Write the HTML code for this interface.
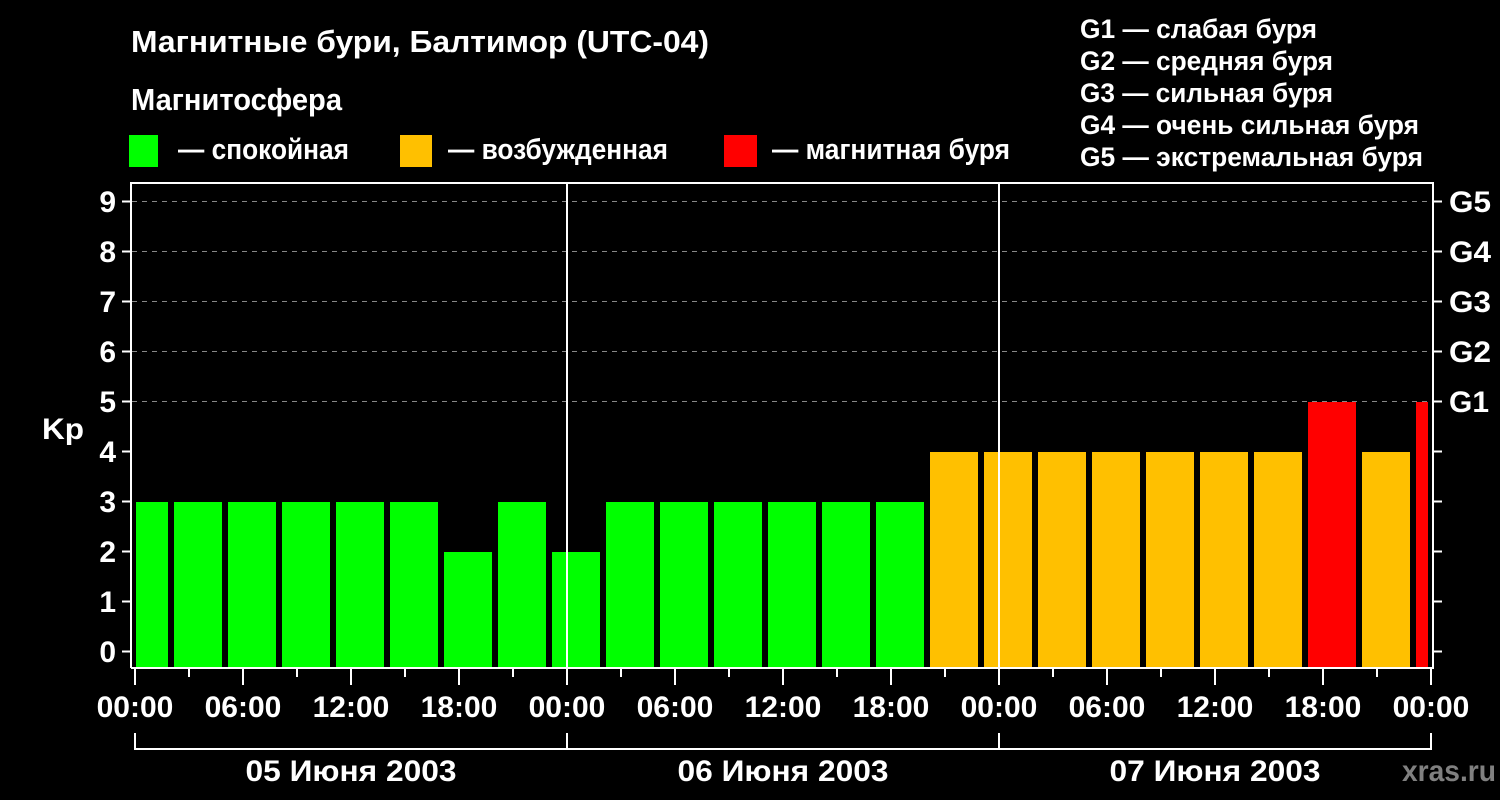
<!DOCTYPE html>
<html><head><meta charset="utf-8"><style>
html,body{margin:0;padding:0;background:#000;width:1500px;height:800px;overflow:hidden}
svg{display:block}
text{font-family:"Liberation Sans",Arial,sans-serif;font-weight:bold;fill:#fff}
</style></head><body>
<svg width="1500" height="800" viewBox="0 0 1500 800" xmlns="http://www.w3.org/2000/svg">
<rect width="1500" height="800" fill="#000"/>
<text x="131" y="52" font-size="31" textLength="578" lengthAdjust="spacingAndGlyphs">Магнитные бури, Балтимор (UTC-04)</text>
<text x="131" y="110" font-size="31" textLength="211" lengthAdjust="spacingAndGlyphs">Магнитосфера</text>
<rect x="129" y="135" width="29" height="32" fill="#00ff00"/>
<text x="178" y="159" font-size="29" textLength="171" lengthAdjust="spacingAndGlyphs">— спокойная</text>
<rect x="400" y="135" width="32" height="32" fill="#ffc000"/>
<text x="448" y="159" font-size="29" textLength="220" lengthAdjust="spacingAndGlyphs">— возбужденная</text>
<rect x="724" y="135" width="33" height="32" fill="#ff0000"/>
<text x="772" y="159" font-size="29" textLength="238" lengthAdjust="spacingAndGlyphs">— магнитная буря</text>
<g font-size="27">
<text x="1080" y="38" textLength="237" lengthAdjust="spacingAndGlyphs">G1 — слабая буря</text>
<text x="1080" y="70" textLength="253" lengthAdjust="spacingAndGlyphs">G2 — средняя буря</text>
<text x="1080" y="102" textLength="253" lengthAdjust="spacingAndGlyphs">G3 — сильная буря</text>
<text x="1080" y="134" textLength="339" lengthAdjust="spacingAndGlyphs">G4 — очень сильная буря</text>
<text x="1080" y="166" textLength="343" lengthAdjust="spacingAndGlyphs">G5 — экстремальная буря</text>
</g>
<g stroke="#888" stroke-width="1" stroke-dasharray="5,5">
<line x1="132" y1="201.5" x2="1432" y2="201.5"/>
<line x1="132" y1="251.5" x2="1432" y2="251.5"/>
<line x1="132" y1="301.5" x2="1432" y2="301.5"/>
<line x1="132" y1="351.5" x2="1432" y2="351.5"/>
<line x1="132" y1="401.5" x2="1432" y2="401.5"/>
</g>
<svg x="136" y="180" width="1292" height="488" viewBox="136 180 1292 488" overflow="hidden">
<g>
<rect x="120" y="502" width="48" height="166" fill="#00ff00"/>
<rect x="174" y="502" width="48" height="166" fill="#00ff00"/>
<rect x="228" y="502" width="48" height="166" fill="#00ff00"/>
<rect x="282" y="502" width="48" height="166" fill="#00ff00"/>
<rect x="336" y="502" width="48" height="166" fill="#00ff00"/>
<rect x="390" y="502" width="48" height="166" fill="#00ff00"/>
<rect x="444" y="552" width="48" height="116" fill="#00ff00"/>
<rect x="498" y="502" width="48" height="166" fill="#00ff00"/>
<rect x="552" y="552" width="48" height="116" fill="#00ff00"/>
<rect x="606" y="502" width="48" height="166" fill="#00ff00"/>
<rect x="660" y="502" width="48" height="166" fill="#00ff00"/>
<rect x="714" y="502" width="48" height="166" fill="#00ff00"/>
<rect x="768" y="502" width="48" height="166" fill="#00ff00"/>
<rect x="822" y="502" width="48" height="166" fill="#00ff00"/>
<rect x="876" y="502" width="48" height="166" fill="#00ff00"/>
<rect x="930" y="452" width="48" height="216" fill="#ffc000"/>
<rect x="984" y="452" width="48" height="216" fill="#ffc000"/>
<rect x="1038" y="452" width="48" height="216" fill="#ffc000"/>
<rect x="1092" y="452" width="48" height="216" fill="#ffc000"/>
<rect x="1146" y="452" width="48" height="216" fill="#ffc000"/>
<rect x="1200" y="452" width="48" height="216" fill="#ffc000"/>
<rect x="1254" y="452" width="48" height="216" fill="#ffc000"/>
<rect x="1308" y="402" width="48" height="266" fill="#ff0000"/>
<rect x="1362" y="452" width="48" height="216" fill="#ffc000"/>
<rect x="1416" y="402" width="48" height="266" fill="#ff0000"/>
</g>
</svg>
<g stroke="#fff" stroke-width="2" fill="none">
<path d="M131 668 V183 H1433 V668 H131"/>
<line x1="567" y1="183" x2="567" y2="668"/>
<line x1="999" y1="183" x2="999" y2="668"/>
</g>
<g stroke="#fff" stroke-width="2">
<line x1="122" y1="201.5" x2="131" y2="201.5"/><line x1="122" y1="251.5" x2="131" y2="251.5"/>
<line x1="122" y1="301.5" x2="131" y2="301.5"/><line x1="122" y1="351.5" x2="131" y2="351.5"/>
<line x1="122" y1="401.5" x2="131" y2="401.5"/><line x1="122" y1="451.5" x2="131" y2="451.5"/>
<line x1="122" y1="501.5" x2="131" y2="501.5"/><line x1="122" y1="551.5" x2="131" y2="551.5"/>
<line x1="122" y1="601.5" x2="131" y2="601.5"/><line x1="122" y1="651.5" x2="131" y2="651.5"/>
<line x1="1433" y1="201.5" x2="1442" y2="201.5"/><line x1="1433" y1="251.5" x2="1442" y2="251.5"/>
<line x1="1433" y1="301.5" x2="1442" y2="301.5"/><line x1="1433" y1="351.5" x2="1442" y2="351.5"/>
<line x1="1433" y1="401.5" x2="1442" y2="401.5"/><line x1="1433" y1="451.5" x2="1442" y2="451.5"/>
<line x1="1433" y1="501.5" x2="1442" y2="501.5"/><line x1="1433" y1="551.5" x2="1442" y2="551.5"/>
<line x1="1433" y1="601.5" x2="1442" y2="601.5"/><line x1="1433" y1="651.5" x2="1442" y2="651.5"/>
</g>
<g stroke="#fff" stroke-width="2">
<line x1="135" y1="668" x2="135" y2="685"/><line x1="189" y1="668" x2="189" y2="677"/>
<line x1="243" y1="668" x2="243" y2="685"/><line x1="297" y1="668" x2="297" y2="677"/>
<line x1="351" y1="668" x2="351" y2="685"/><line x1="405" y1="668" x2="405" y2="677"/>
<line x1="459" y1="668" x2="459" y2="685"/><line x1="513" y1="668" x2="513" y2="677"/>
<line x1="567" y1="668" x2="567" y2="685"/><line x1="621" y1="668" x2="621" y2="677"/>
<line x1="675" y1="668" x2="675" y2="685"/><line x1="729" y1="668" x2="729" y2="677"/>
<line x1="783" y1="668" x2="783" y2="685"/><line x1="837" y1="668" x2="837" y2="677"/>
<line x1="891" y1="668" x2="891" y2="685"/><line x1="945" y1="668" x2="945" y2="677"/>
<line x1="999" y1="668" x2="999" y2="685"/><line x1="1053" y1="668" x2="1053" y2="677"/>
<line x1="1107" y1="668" x2="1107" y2="685"/><line x1="1161" y1="668" x2="1161" y2="677"/>
<line x1="1215" y1="668" x2="1215" y2="685"/><line x1="1269" y1="668" x2="1269" y2="677"/>
<line x1="1323" y1="668" x2="1323" y2="685"/><line x1="1377" y1="668" x2="1377" y2="677"/>
<line x1="1431" y1="668" x2="1431" y2="685"/>
</g>
<g stroke="#fff" stroke-width="2" fill="none">
<path d="M135 733 V749 H1431 V733"/>
<line x1="567" y1="733" x2="567" y2="749"/>
<line x1="999" y1="733" x2="999" y2="749"/>
</g>
<g font-size="30" text-anchor="end">
<text x="116" y="212">9</text><text x="116" y="262">8</text><text x="116" y="312">7</text>
<text x="116" y="362">6</text><text x="116" y="412">5</text><text x="116" y="462">4</text>
<text x="116" y="512">3</text><text x="116" y="562">2</text><text x="116" y="612">1</text>
<text x="116" y="662">0</text>
</g>
<g font-size="30">
<text x="1449" y="212" textLength="42" lengthAdjust="spacingAndGlyphs">G5</text><text x="1449" y="262" textLength="42" lengthAdjust="spacingAndGlyphs">G4</text><text x="1449" y="312" textLength="42" lengthAdjust="spacingAndGlyphs">G3</text>
<text x="1449" y="362" textLength="42" lengthAdjust="spacingAndGlyphs">G2</text><text x="1449" y="412" textLength="40" lengthAdjust="spacingAndGlyphs">G1</text>
</g>
<text x="42" y="439" font-size="30" textLength="42" lengthAdjust="spacingAndGlyphs">Kp</text>
<g font-size="30" text-anchor="middle">
<text x="135" y="717">00:00</text><text x="243" y="717">06:00</text><text x="351" y="717">12:00</text>
<text x="459" y="717">18:00</text><text x="567" y="717">00:00</text><text x="675" y="717">06:00</text>
<text x="783" y="717">12:00</text><text x="891" y="717">18:00</text><text x="999" y="717">00:00</text>
<text x="1107" y="717">06:00</text><text x="1215" y="717">12:00</text><text x="1323" y="717">18:00</text>
<text x="1431" y="717">00:00</text>
<text x="351" y="781" textLength="211" lengthAdjust="spacingAndGlyphs">05 Июня 2003</text>
<text x="783" y="781" textLength="211" lengthAdjust="spacingAndGlyphs">06 Июня 2003</text>
<text x="1215" y="781" textLength="211" lengthAdjust="spacingAndGlyphs">07 Июня 2003</text>
</g>
<text x="1402" y="781" font-size="30" textLength="94" lengthAdjust="spacingAndGlyphs" style="fill:#808080">xras.ru</text>
</svg>
</body></html>
